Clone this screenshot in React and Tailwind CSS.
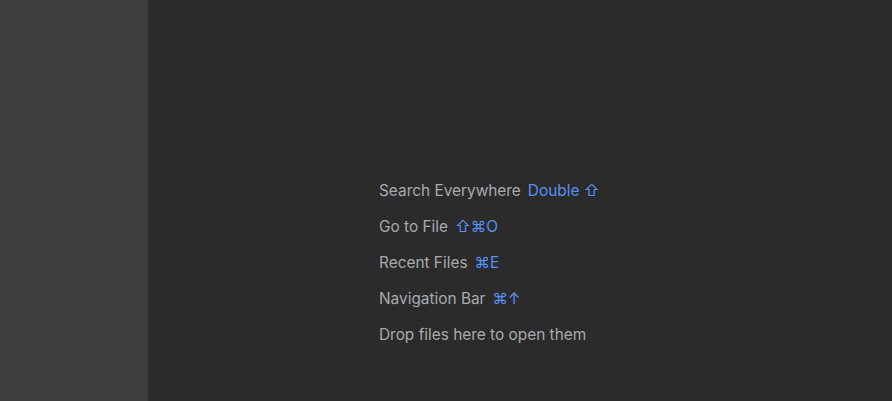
import React from "react";

const rows = [
  { label: "Search Everywhere", keys: "Double ⇧" },
  { label: "Go to File", keys: "⇧⌘O" },
  { label: "Recent Files", keys: "⌘E" },
  { label: "Navigation Bar", keys: "⌘↑" },
  { label: "Drop files here to open them", keys: null },
];

export default function App() {
  return (
    <div className="flex h-[401px] w-[892px] overflow-hidden bg-[#2b2b2b] font-['Inter','Noto_Sans',sans-serif]">
      <div className="w-[148px] shrink-0 bg-[#3c3d3f]" />
      <div className="flex flex-1 flex-col pl-[231px] pt-[180px]">
        {rows.map((r) => (
          <div key={r.label} className="flex h-[36px] items-start text-[15.4px] leading-[22px]">
            <span className="text-[#a8aaad]">{r.label}</span>
            {r.keys && <span className="ml-[7px] text-[#5591f7]">{r.keys}</span>}
          </div>
        ))}
      </div>
    </div>
  );
}
